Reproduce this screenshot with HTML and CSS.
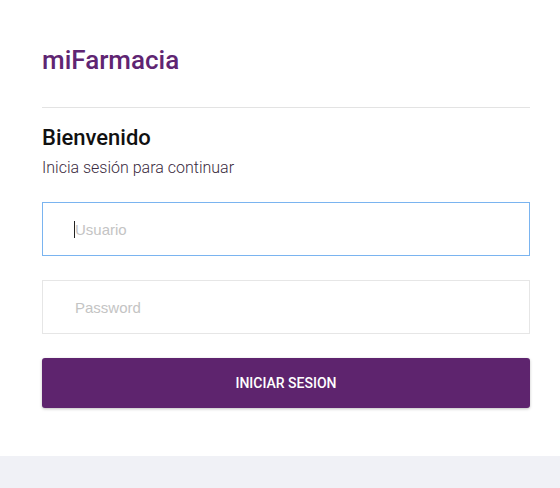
FILE: index.html
```html
<!DOCTYPE html>
<html lang="es">
<head>
<meta charset="utf-8">
<link rel="stylesheet" href="styles.css">
</head>
<body>
<main class="card">
  <h1 class="brand">miFarmacia</h1>
  <hr class="divider">
  <h2 class="title">Bienvenido</h2>
  <p class="subtitle">Inicia sesión para continuar</p>
  <form class="form">
    <div class="field-wrap">
      <input class="field field-focus" type="text" placeholder="Usuario">
      <span class="caret"></span>
    </div>
    <div class="field-wrap">
      <input class="field" type="password" placeholder="Password">
    </div>
    <button class="btn" type="button">INICIAR SESION</button>
  </form>
</main>
<footer class="footer"></footer>
</body>
</html>
```
FILE: styles.css
```css
* { box-sizing: border-box; }
html, body { margin: 0; padding: 0; }
body {
  background: #fff;
  font-family: Roboto, "Liberation Sans", sans-serif;
  width: 560px;
  height: 488px;
  overflow: hidden;
}
.card {
  background: #fff;
  height: 456px;
  padding: 44px 30px 0 42px;
}
.brand {
  margin: 0;
  font-size: 26px;
  font-weight: 500;
  color: #5f2572;
  line-height: 32px;
}
.divider {
  border: 0;
  border-top: 1px solid #e3e3e3;
  margin: 31px 0 0;
}
.title {
  margin: 16px 0 0;
  font-size: 22px;
  font-weight: 500;
  color: #111;
  line-height: 28px;
}
.subtitle {
  margin: 6px 0 0;
  font-size: 16px;
  font-weight: 300;
  color: #3a2a40;
  line-height: 20px;
}
.form {
  display: flex;
  flex-direction: column;
  margin-top: 24px;
}
.field-wrap {
  position: relative;
  margin: 0 0 24px;
}
.field {
  display: block;
  width: 100%;
  height: 54px;
  border: 1px solid #e6e6e6;
  padding: 0 0 0 32px;
  font-family: "Liberation Sans", Arial, sans-serif;
  font-size: 15px;
  color: #333;
  outline: none;
  border-radius: 0;
}
.field::placeholder { color: #c4c4c4; }
.field-focus { border-color: #7ab4f0; }
.caret {
  position: absolute;
  left: 32px;
  top: 19px;
  width: 1px;
  height: 17px;
  background: #222;
}
.btn {
  height: 50px;
  border: 0;
  border-radius: 3px;
  background: #5e246e;
  color: #fff;
  font-family: Roboto, sans-serif;
  font-size: 14px;
  font-weight: 500;
  box-shadow: 0 1px 3px rgba(0,0,0,0.25);
  margin-top: 0;
}
.footer {
  height: 32px;
  background: #f0f1f6;
}
```
